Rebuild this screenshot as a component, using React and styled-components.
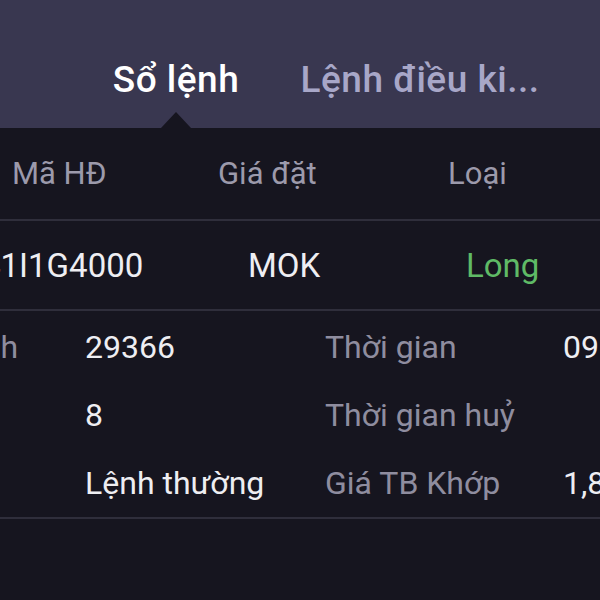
import React from 'react';
import styled, { createGlobalStyle } from 'styled-components';

const GlobalStyle = createGlobalStyle`
    html, body {
        margin: 0;
        padding: 0;
        background: #16151f;
    }
    body {
        font-family: Roboto, "Noto Sans", "Liberation Sans", sans-serif;
    }
`;

const tabs = [
    { label: 'Tài sản' },
    { label: 'Sổ lệnh', active: true },
    { label: 'Lệnh điều ki...' },
];

const details = [
    { label: 'Số hiệu lệnh', value: '29366', label2: 'Thời gian', value2: '09:14:27' },
    { label: 'KL đặt', value: '8', label2: 'Thời gian huỷ', value2: '' },
    { label: 'Loại lệnh', value: 'Lệnh thường', label2: 'Giá TB Khớp', value2: '1,845.2' },
];

const App = () => {

    return (
        <>
            <GlobalStyle />
            <Screen>
                <Content>

                    <TabBar>
                        {tabs.map((t) => (
                            <Tab key={t.label} active={t.active}>
                                {t.label}
                                {t.active && <Caret />}
                            </Tab>
                        ))}
                    </TabBar>

                    <HeaderRow>
                        <HeadCell>Mã HĐ</HeadCell>
                        <HeadCell>Giá đặt</HeadCell>
                        <HeadCell>Loại</HeadCell>
                    </HeaderRow>

                    <OrderRow>
                        <Value>41I1G4000</Value>
                        <Value>MOK</Value>
                        <Side>Long</Side>
                    </OrderRow>

                    <Details>
                        {details.map((d) => (
                            <DetailRow key={d.label}>
                                <Label>{d.label}</Label>
                                <Value>{d.value}</Value>
                                <Label>{d.label2}</Label>
                                <Value>{d.value2}</Value>
                            </DetailRow>
                        ))}
                    </Details>

                </Content>
            </Screen>
        </>
    );
};

export default App;

const Screen = styled.div`
    width: 600px;
    height: 600px;
    overflow: hidden;
    background: #16151f;
`;

const Content = styled.div`
    width: 1000px;
    margin-left: -200px;
`;

const TabBar = styled.div`
    display: grid;
    grid-template-columns: repeat(3, 244px);
    padding-left: 10px;
    height: 128px;
    background: #393750;
`;

const Tab = styled.div`
    position: relative;
    box-sizing: border-box;
    padding: 62px 2px 0;
    font-size: 37px;
    line-height: 36px;
    letter-spacing: 0.5px;
    font-weight: 500;
    text-align: center;
    white-space: nowrap;
    overflow: hidden;
    color: ${(p) => (p.active ? '#ffffff' : '#a8a7c8')};
`;

const Caret = styled.span`
    position: absolute;
    left: 50%;
    bottom: 0;
    transform: translateX(-50%);
    width: 0;
    height: 0;
    border-left: 15px solid transparent;
    border-right: 15px solid transparent;
    border-bottom: 16px solid #16151f;
`;

const Row = styled.div`
    display: grid;
    align-items: center;
    box-sizing: border-box;
    border-bottom: 2px solid #2f2e3b;
    font-size: 31px;
    white-space: nowrap;
`;

const HeaderRow = styled(Row)`
    height: 93px;
    padding-left: 212px;
    grid-template-columns: 206px 230px 1fr;
`;

const OrderRow = styled(Row)`
    height: 90px;
    padding-left: 182px;
    grid-template-columns: 266px 218px 1fr;
    font-size: 33px;
`;

const Details = styled.div`
    box-sizing: border-box;
    padding-top: 2px;
    border-bottom: 2px solid #2f2e3b;
`;

const DetailRow = styled.div`
    display: grid;
    align-items: center;
    height: 68px;
    padding-left: 45px;
    grid-template-columns: 240px 240px 238px 1fr;
    font-size: 32px;
    white-space: nowrap;
`;

const HeadCell = styled.span`
    color: #9c9aab;
`;

const Label = styled.span`
    color: #8f8d9f;
`;

const Value = styled.span`
    color: #eeeef2;
`;

const Side = styled.span`
    color: #5fba66;
`;
